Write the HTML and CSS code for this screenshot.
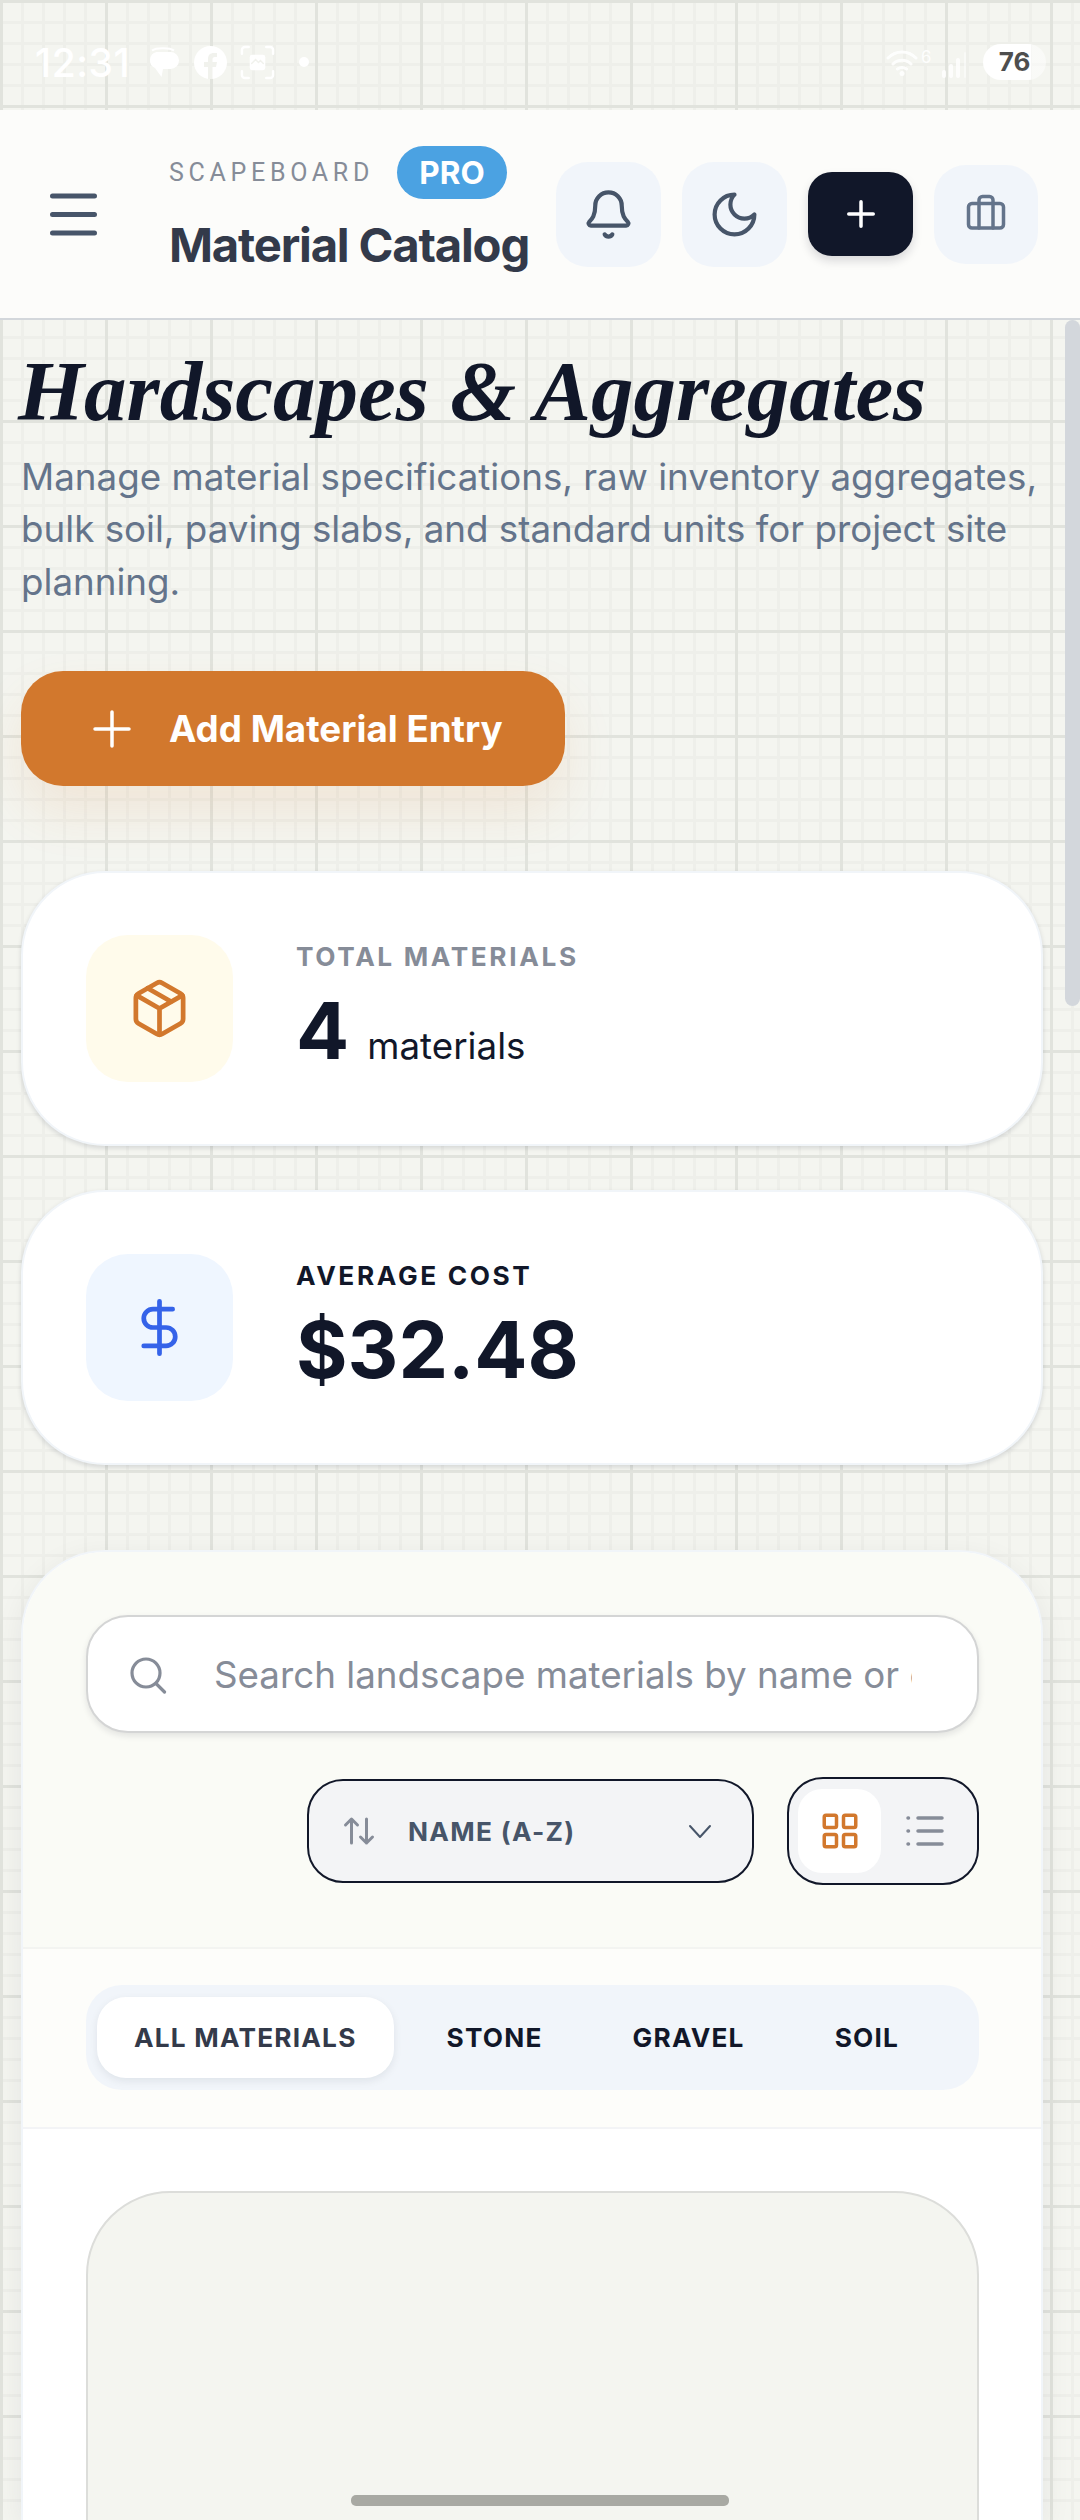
FILE: index.html
```html
<!DOCTYPE html>
<html lang="en">
<head>
    <meta charset="UTF-8">
    <meta name="viewport" content="width=device-width, initial-scale=1.0">
    <title>Material Catalog</title>
    <link rel="stylesheet" href="styles.css">
</head>
<body>
    <div class="status-bar">
        <div class="status-left">
            <span class="clock">12:31</span>
            <svg class="st-chat" width="31" height="30" viewBox="0 0 31 30" fill="#fff"><path d="M4 3.500C8 .5 22 .5 26 3.500" fill="none" stroke="#fff" stroke-width="2"/><path d="M8.500 5h14a8.500 8.500 0 0 1 0 17H15l-1.500 8L7 21A8.500 8.500 0 0 1 8.500 5z"/></svg>
            <svg class="st-fb" width="33" height="33" viewBox="0 0 33 33"><circle cx="16.500" cy="16.500" r="16.500" fill="#fff"/><path d="M14 33V21h-4v-5h4v-3c0-4 2-6 6-6h3v4h-2c-2 0-2.500 1-2.500 2.500V16H23l-1 5h-3.500v12z" fill="#f1f2ed"/></svg>
            <svg class="st-shot" width="35" height="35" viewBox="0 0 36 36" fill="none" stroke="#fff" stroke-width="2.500" stroke-linecap="round"><path d="M2 9V5a3 3 0 0 1 3-3h4M27 2h4a3 3 0 0 1 3 3v4M34 27v4a3 3 0 0 1-3 3h-4M9 34H5a3 3 0 0 1-3-3v-4"/><rect x="10" y="10" width="16" height="16" rx="2.500" fill="#fff" stroke="none"/><path d="M12 19l4-4 3 3 2-2 3 3" stroke="#f1f2ed" stroke-width="1.500"/></svg>
            <span class="st-dot"></span>
        </div>
        <div class="status-right">
            <svg class="st-wifi" width="32" height="27" viewBox="0 0 32 27" fill="none" stroke="#fff" stroke-width="3" stroke-linecap="round"><path d="M2 9c8-8 20-8 28 0M7 15c5-5 13-5 18 0M11.500 20c2.500-2 6.500-2 9 0"/><circle cx="16" cy="24.500" r="2.500" fill="#fff" stroke="none"/></svg>
            <span class="wifi-six">6</span>
            <svg class="st-signal" width="26" height="26" viewBox="0 0 26 26" fill="#fff"><rect x="0" y="18" width="4" height="8" rx="2"/><rect x="7" y="12" width="4" height="14" rx="2"/><rect x="14" y="6" width="4" height="20" rx="2"/><rect x="22" y="0" width="2" height="26" rx="1" opacity="0.6"/></svg>
            <span class="battery">76</span>
        </div>
    </div>

    <header class="topbar">
        <svg class="menu-icon" width="48" height="48" viewBox="0 0 48 48" fill="none" stroke="#475569" stroke-width="5" stroke-linecap="round"><path d="M2.500 6h42M2.500 24.500h42M2.500 43h42"/></svg>
        <div class="brand">
            <div class="brand-top">
                <span class="brand-name">SCAPEBOARD</span>
                <span class="pro">PRO</span>
            </div>
            <div class="brand-title">Material Catalog</div>
        </div>
        <div class="top-actions">
            <button class="tb-btn">
                <svg width="53" height="53" viewBox="0 0 24 24" fill="none" stroke="#475569" stroke-width="1.900" stroke-linecap="round" stroke-linejoin="round"><path d="M10.268 21a2 2 0 0 0 3.464 0"/><path d="M3.262 15.326A1 1 0 0 0 4 17h16a1 1 0 0 0 .74-1.673C19.410 13.956 18 12.499 18 8A6 6 0 0 0 6 8c0 4.499-1.411 5.956-2.738 7.326"/></svg>
            </button>
            <button class="tb-btn">
                <svg width="53" height="53" viewBox="0 0 24 24" fill="none" stroke="#475569" stroke-width="1.900" stroke-linecap="round" stroke-linejoin="round"><path d="M12 3a6 6 0 0 0 9 9 9 9 0 1 1-9-9Z"/></svg>
            </button>
            <button class="tb-btn tb-dark">
                <svg width="42" height="42" viewBox="0 0 24 24" fill="none" stroke="#fff" stroke-width="2" stroke-linecap="round"><path d="M5 12h14M12 5v14"/></svg>
            </button>
            <button class="tb-btn tb-small">
                <svg width="42" height="42" viewBox="0 0 24 24" fill="none" stroke="#64748b" stroke-width="2" stroke-linecap="round" stroke-linejoin="round"><path d="M16 20V4a2 2 0 0 0-2-2h-4a2 2 0 0 0-2 2v16"/><rect x="2" y="6" width="20" height="14" rx="2"/></svg>
            </button>
        </div>
    </header>

    <main class="page">
        <h1>Hardscapes &amp; Aggregates</h1>
        <p class="lead">Manage material specifications, raw inventory aggregates, bulk soil, paving slabs, and standard units for project site planning.</p>

        <button class="add-btn">
            <svg width="38" height="38" viewBox="0 0 38 38" fill="none" stroke="#fff" stroke-width="3.500" stroke-linecap="round"><path d="M19 2v34M2 19h34"/></svg>
            Add Material Entry
        </button>

        <section class="stat-card">
            <div class="stat-icon amber">
                <svg width="63" height="63" viewBox="0 0 24 24" fill="none" stroke="#d2782d" stroke-width="1.800" stroke-linecap="round" stroke-linejoin="round"><path d="M21 8v8a2 2 0 0 1-1 1.730l-7 4a2 2 0 0 1-2 0l-7-4A2 2 0 0 1 3 16V8a2 2 0 0 1 1-1.730l7-4a2 2 0 0 1 2 0l7 4A2 2 0 0 1 21 8z"/><path d="M3.300 7 12 12l8.700-5M12 22V12M7.500 4.270l9 5.150"/></svg>
            </div>
            <div class="stat-text">
                <div class="stat-label muted">TOTAL MATERIALS</div>
                <div class="stat-value">4<span class="stat-unit">materials</span></div>
            </div>
        </section>

        <section class="stat-card">
            <div class="stat-icon blue">
                <svg width="63" height="63" viewBox="0 0 24 24" fill="none" stroke="#3563e9" stroke-width="1.800" stroke-linecap="round" stroke-linejoin="round"><path d="M12 2v20M17 5H9.500a3.500 3.500 0 0 0 0 7h5a3.500 3.500 0 0 1 0 7H6"/></svg>
            </div>
            <div class="stat-text">
                <div class="stat-label">AVERAGE COST</div>
                <div class="stat-value">$32.48</div>
            </div>
        </section>

        <section class="panel">
            <div class="panel-tools">
                <div class="search">
                    <svg width="40" height="40" viewBox="0 0 40 40" fill="none" stroke="#868c98" stroke-width="3.200" stroke-linecap="round"><circle cx="16" cy="19" r="14"/><path d="m26.500 30 8 8"/></svg>
                    <span class="search-text">Search landscape materials by name or category</span>
                </div>
                <div class="tool-row">
                    <div class="sort">
                        <svg width="36" height="36" viewBox="0 0 24 24" fill="none" stroke="#868c98" stroke-width="2" stroke-linecap="round" stroke-linejoin="round"><path d="M7 20V4M3 8l4-4 4 4M17 4v16M13 16l4 4 4-4"/></svg>
                        <span class="sort-text">NAME (A-Z)</span>
                        <svg class="chev" width="24" height="24" viewBox="0 0 24 24" fill="none" stroke="#475569" stroke-width="2" stroke-linecap="round" stroke-linejoin="round"><path d="m2 7 10 11L22 7"/></svg>
                    </div>
                    <div class="view-toggle">
                        <span class="view-on">
                            <svg width="42" height="42" viewBox="0 0 24 24" fill="none" stroke="#d2782d" stroke-width="2"><rect x="3" y="3" width="7" height="7" rx="1"/><rect x="14" y="3" width="7" height="7" rx="1"/><rect x="3" y="14" width="7" height="7" rx="1"/><rect x="14" y="14" width="7" height="7" rx="1"/></svg>
                        </span>
                        <span class="view-off">
                            <svg width="38" height="32" viewBox="0 0 38 32" fill="none" stroke="#868c98" stroke-width="3.500" stroke-linecap="round"><path d="M12 3h24M12 16h24M12 29h24M2 3h.5M2 16h.5M2 29h.5"/></svg>
                        </span>
                    </div>
                </div>
            </div>

            <div class="panel-tabs">
                <div class="tabs">
                    <span class="tab tab-on">ALL MATERIALS</span>
                    <span class="tab">STONE</span>
                    <span class="tab">GRAVEL</span>
                    <span class="tab">SOIL</span>
                </div>
            </div>

            <div class="panel-body">
                <div class="item-card"></div>
            </div>
        </section>
    </main>

    <div class="scroll-thumb"></div>
    <div class="home-bar"></div>
</body>
</html>
```

FILE: styles.css
```css
* {
    box-sizing: border-box;
    margin: 0;
    padding: 0;
}

html, body {
    height: 2520px;
    overflow: hidden;
}

body {
    position: relative;
    font-family: Inter, Arial, sans-serif;
    color: #111729;
    background-color: #f4f5f0;
    background-image:
        linear-gradient(#e1e3dd 2.625px, transparent 2.625px),
        linear-gradient(90deg, #e1e3dd 2.625px, transparent 2.625px),
        linear-gradient(#eeefea 2.625px, transparent 2.625px),
        linear-gradient(90deg, #eeefea 2.625px, transparent 2.625px);
    background-size: 105px 105px, 105px 105px, 21px 21px, 21px 21px;
}

.status-bar {
    height: 110px;
    display: flex;
    align-items: center;
    justify-content: space-between;
    padding: 14px 34px 0 35px;
}

.status-left, .status-right {
    display: flex;
    align-items: center;
}

.clock {
    width: 92px;
    font-size: 39px;
    font-weight: 500;
    letter-spacing: 0.5px;
    color: #fff;
    white-space: nowrap;
}

.st-chat {
    margin-left: 21px;
}

.st-fb {
    margin-left: 15px;
}

.st-shot {
    margin-left: 13px;
}

.st-dot {
    width: 10px;
    height: 10px;
    margin-left: 24px;
    border-radius: 50%;
    background: #fff;
}

.st-wifi {
    opacity: 0.9;
}

.wifi-six {
    width: 11px;
    margin-left: 3px;
    margin-bottom: 10px;
    font-size: 17px;
    line-height: 20px;
    color: #fff;
    opacity: 0.9;
}

.st-signal {
    margin-left: 10px;
    margin-top: 6px;
    opacity: 0.85;
}

.battery {
    width: 63px;
    height: 36px;
    margin-left: 15px;
    border-radius: 18px;
    background: linear-gradient(90deg, #fff 76%, rgba(255, 255, 255, 0.5) 76%);
    color: #4e4e4e;
    font-size: 26px;
    font-weight: 700;
    line-height: 36px;
    text-align: center;
}

.topbar {
    height: 210px;
    display: flex;
    align-items: center;
    padding: 0 0 0 50px;
    background: #fcfcfa;
    border-bottom: 2.625px solid #d3d7db;
}

.menu-icon {
    flex: none;
}

.brand {
    margin-left: 71px;
    width: 387px;
    padding-bottom: 9px;
}

.brand-top {
    display: flex;
    align-items: center;
    gap: 23px;
}

.brand-name {
    font-family: Roboto, Arial, sans-serif;
    font-size: 25px;
    letter-spacing: 4.7px;
    line-height: 32px;
    color: #868c98;
}

.pro {
    width: 110px;
    height: 53px;
    border-radius: 27px;
    background: #4ba2e2;
    color: #fff;
    font-size: 31.5px;
    font-weight: 700;
    line-height: 53px;
    text-align: center;
}

.brand-title {
    margin-top: 18px;
    font-size: 47.25px;
    font-weight: 700;
    letter-spacing: -1.2px;
    line-height: 56px;
    color: #333a4a;
    white-space: nowrap;
}

.top-actions {
    display: flex;
    align-items: center;
    gap: 21px;
}

.tb-btn {
    width: 105px;
    height: 105px;
    display: flex;
    align-items: center;
    justify-content: center;
    flex: none;
    border: none;
    border-radius: 32px;
    background: #f1f5fa;
}

.tb-dark {
    height: 84px;
    border-radius: 24px;
    background: #111729;
    box-shadow: 0 5px 10px rgba(17, 23, 41, 0.15);
}

.tb-small {
    width: 104px;
    height: 99px;
}

.page {
    padding: 0 21px;
}

h1 {
    margin-top: 25px;
    margin-left: -3px;
    font-family: "Liberation Serif", serif;
    font-size: 85px;
    font-style: italic;
    font-weight: 700;
    line-height: 92px;
    color: #111729;
    white-space: nowrap;
}

.lead {
    margin-top: 13.5px;
    width: 1045px;
    font-size: 36.75px;
    line-height: 52.5px;
    color: #64748b;
}

.add-btn {
    width: 544px;
    height: 115px;
    margin-top: 63px;
    display: flex;
    align-items: center;
    gap: 38px;
    padding-left: 72px;
    border: none;
    border-radius: 42px;
    background: #d2782d;
    color: #fff;
    font-family: Inter, Arial, sans-serif;
    font-size: 36.75px;
    font-weight: 700;
    box-shadow: 0 26px 52px rgba(210, 120, 45, 0.12);
}

.stat-card {
    width: 1022px;
    height: 275px;
    margin-top: 44px;
    display: flex;
    align-items: center;
    gap: 63px;
    padding-left: 63px;
    border: 2.625px solid #f1f5f9;
    border-radius: 84px;
    background: #fff;
    box-shadow: 0 2px 5px rgba(17, 23, 41, 0.14);
}

.add-btn + .stat-card {
    margin-top: 85px;
}

.stat-icon {
    width: 147px;
    height: 147px;
    display: flex;
    align-items: center;
    justify-content: center;
    border-radius: 42px;
}

.amber {
    background: #fffbeb;
}

.blue {
    background: #eff6ff;
}

.stat-text {
    padding-bottom: 3px;
}

.stat-label {
    font-size: 26.25px;
    font-weight: 700;
    letter-spacing: 2.625px;
    line-height: 32px;
    color: #111729;
}

.muted {
    color: #868c98;
}

.stat-value {
    margin-top: 16px;
    font-size: 78.75px;
    font-weight: 700;
    line-height: 84px;
}

.stat-unit {
    margin-left: 18px;
    font-size: 36.75px;
    font-weight: 400;
    line-height: 1;
}

.panel {
    width: 1022px;
    height: 970px;
    margin-top: 85px;
    border: 2.625px solid #f1f5f9;
    border-bottom: none;
    border-radius: 84px 84px 0 0;
    background: #fff;
    overflow: hidden;
    box-shadow: 0 8px 30px rgba(17, 23, 41, 0.07);
}

.panel-tools {
    height: 397px;
    padding: 63px 62px 0 63px;
    background: #fafbf6;
    border-bottom: 2px solid #f3f4f1;
}

.search {
    height: 118px;
    display: flex;
    align-items: center;
    gap: 44px;
    padding-left: 42px;
    border: 2px solid #d4d5d5;
    border-radius: 42px;
    background: #fff;
    box-shadow: 0 3px 6px rgba(17, 23, 41, 0.1);
}

.search-text {
    width: 698px;
    overflow: hidden;
    font-size: 36.75px;
    white-space: nowrap;
    color: #868c98;
}

.tool-row {
    display: flex;
    align-items: center;
    justify-content: flex-end;
    gap: 33px;
    margin-top: 44px;
}

.sort {
    width: 447px;
    height: 104px;
    display: flex;
    align-items: center;
    padding: 0 40px 0 32px;
    border: 2.625px solid #111729;
    border-radius: 36px;
    background: #f3f4f6;
}

.sort-text {
    margin-left: 31px;
    font-size: 26.25px;
    font-weight: 700;
    letter-spacing: 1.3px;
    color: #475569;
}

.chev {
    margin-left: auto;
}

.view-toggle {
    width: 192px;
    height: 108px;
    display: flex;
    align-items: center;
    padding: 0 9px;
    border: 2.625px solid #111729;
    border-radius: 36px;
    background: #f3f4f6;
}

.view-on {
    width: 83px;
    height: 84px;
    display: flex;
    align-items: center;
    justify-content: center;
    border-radius: 24px;
    background: #fff;
}

.view-off {
    flex: 1;
    display: flex;
    align-items: center;
    justify-content: center;
}

.panel-tabs {
    height: 180px;
    padding: 36px 62px 0 63px;
    background: #fdfdfa;
    border-bottom: 2px solid #f3f4f6;
}

.tabs {
    height: 105px;
    display: flex;
    align-items: center;
    gap: 16px;
    padding: 0 11px;
    border-radius: 36px;
    background: #f1f5fa;
}

.tab {
    height: 81px;
    padding: 0 37px;
    font-size: 26.25px;
    font-weight: 700;
    letter-spacing: 1.2px;
    line-height: 81px;
    color: #111729;
    border-radius: 29px;
}

.tab-on {
    background: #fff;
    color: #333a4a;
    box-shadow: 0 3px 8px rgba(17, 23, 41, 0.08);
}

.panel-body {
    padding: 62px 62px 0 63px;
}

.item-card {
    height: 700px;
    border: 2px solid #dcddda;
    border-radius: 84px;
    background: #f4f5f0;
}

.scroll-thumb {
    position: absolute;
    top: 320px;
    right: 0;
    width: 15px;
    height: 686px;
    border-radius: 8px;
    background: #d3d7dc;
}

.home-bar {
    position: absolute;
    left: 351px;
    top: 2495px;
    width: 378px;
    height: 11px;
    border-radius: 5px;
    background: #a8a9a3;
}
```
